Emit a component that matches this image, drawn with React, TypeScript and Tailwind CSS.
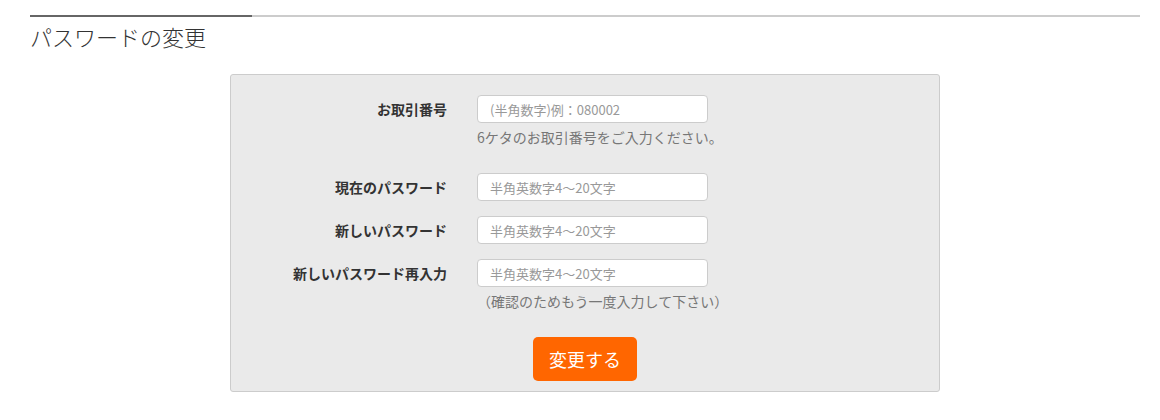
export default function App() {
  const jp = { fontFamily: '"Noto Sans CJK JP", "Noto Sans", sans-serif' };

  // rows of the form
  const rows = [
    { label: 'お取引番号', placeholder: '(半角数字)例：080002', help: '6ケタのお取引番号をご入力ください。', mt: 'mt-0' },
    { label: '現在のパスワード', placeholder: '半角英数字4～20文字', help: '', mt: 'mt-[26px]' },
    { label: '新しいパスワード', placeholder: '半角英数字4～20文字', help: '', mt: 'mt-[15px]' },
    { label: '新しいパスワード再入力', placeholder: '半角英数字4～20文字', help: '（確認のためもう一度入力して下さい）', mt: 'mt-[15px]' },
  ];

  return (
    <div className="w-[1160px] h-[420px] bg-white pl-[30px] pr-[20px] text-[#333]" style={jp}>
      {/* Heading */}
      <div className="pt-[15px]">
        <div className="h-[2px] bg-[#cccccc]">
          <div className="h-[2px] w-[222px] bg-[#666666]" />
        </div>
        <h2 className="mt-[4px] text-[22px] leading-[30px] font-light text-[#333]">パスワードの変更</h2>
      </div>

      {/* Form panel */}
      <div className="mx-auto mt-[23px] w-[710px] rounded-[3px] border border-[#cccccc] bg-[#eaeaea] pt-[20px] pb-[10px]">
        {rows.map((r) => (
          <div key={r.label} className={`flex items-start ${r.mt}`}>
            <div className="flex h-[28px] w-[216px] items-center justify-end text-[14px] font-bold text-[#333]">
              {r.label}
            </div>
            <div className="ml-[30px] flex flex-col">
              <input
                type="text"
                placeholder={r.placeholder}
                className="h-[28px] w-[231px] rounded-[4px] border border-[#cccccc] bg-white px-[12px] text-[13px] text-[#333] placeholder:text-[#999] outline-none"
                style={jp}
              />
              {r.help && (
                <p className="mt-[4px] whitespace-nowrap text-[14px] leading-[20px] text-[#777]">{r.help}</p>
              )}
            </div>
          </div>
        ))}

        <div className="mt-[26px] flex justify-center">
          <button
            type="button"
            className="h-[44px] w-[104px] rounded-[5px] bg-[#ff6600] text-[18px] text-white"
            style={jp}
          >
            変更する
          </button>
        </div>
      </div>
    </div>
  );
}
